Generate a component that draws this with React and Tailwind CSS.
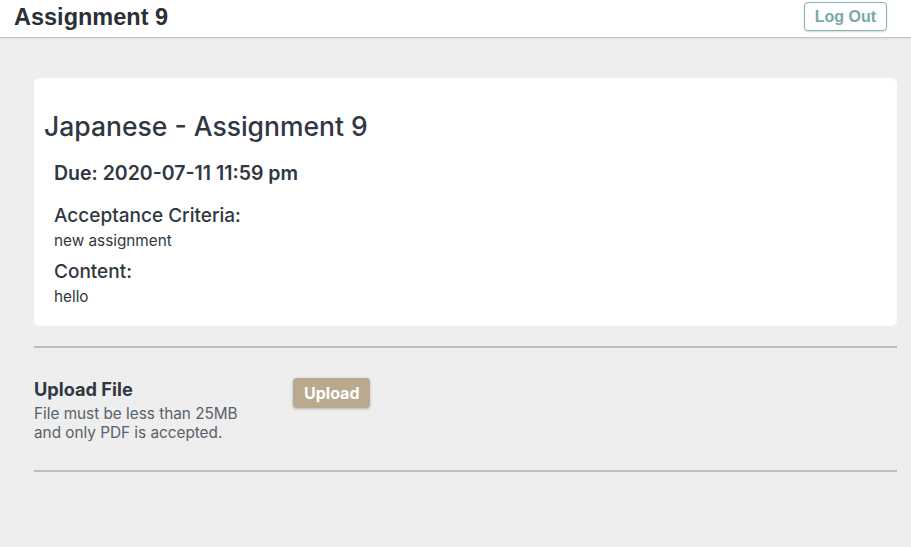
import React from 'react';

const Header = () => (
  <header className="flex items-center justify-between h-[38px] bg-white border-b border-[#c4c4c4] pl-[14px] pr-[24px] shadow-[0_1px_2px_rgba(0,0,0,0.08)]">
    <h1 className="text-[23.5px] font-bold text-[#2b3035] font-['Liberation_Sans',Arial,sans-serif] leading-none -mt-[2px]">
      Assignment 9
    </h1>
    <button className="h-[29px] px-[10px] rounded-[4px] border border-[#86b3b3] text-[#7aa8a8] text-[16px] font-bold font-['Liberation_Sans',Arial,sans-serif] shadow-[0_1px_2px_rgba(0,0,0,0.15)] bg-white -mt-[4px]">
      Log Out
    </button>
  </header>
);

const AssignmentCard = () => (
  <div className="bg-white rounded-[6px] pt-[32px] pb-[19px] px-[10px] text-[#2f3842]">
    <h2 className="text-[26.5px] font-medium leading-[32px]">Japanese - Assignment 9</h2>
    <div className="pl-[10px]">
      <p className="mt-[19px] text-[19.5px] font-semibold leading-[24px]">Due: 2020-07-11 11:59 pm</p>
      <p className="mt-[19px] text-[19px] font-medium leading-[24px]">Acceptance Criteria:</p>
      <p className="text-[15.3px] leading-[20px] mt-[3px]">new assignment</p>
      <p className="mt-[9px] text-[19px] font-medium leading-[24px]">Content:</p>
      <p className="text-[15.3px] leading-[20px] mt-[3px]">hello</p>
    </div>
  </div>
);

const UploadSection = () => (
  <div className="flex items-start pt-[30px] pb-[28px]">
    <div className="w-[259px]">
      <p className="text-[18.2px] font-bold leading-[22px] text-[#2f3842]">Upload File</p>
      <p className="text-[15.3px] leading-[19px] text-[#58616a] mt-[4px]">
        File must be less than 25MB
        <br />
        and only PDF is accepted.
      </p>
    </div>
    <button className="h-[30px] px-[11px] rounded-[4px] bg-[#b9a98f] text-white text-[16px] font-bold shadow-[0_1px_3px_rgba(0,0,0,0.25)]">
      Upload
    </button>
  </div>
);

export default function App() {
  return (
    <div className="min-h-screen bg-[#eeeeee] font-['Inter','Noto_Sans',sans-serif]">
      <Header />
      <main className="pl-[34px] pr-[14px] pt-[40px]">
        <AssignmentCard />
        <div className="mt-[20px] h-[2px] bg-[#bdbdbd]" />
        <UploadSection />
        <div className="h-[2px] bg-[#bdbdbd]" />
      </main>
    </div>
  );
}
